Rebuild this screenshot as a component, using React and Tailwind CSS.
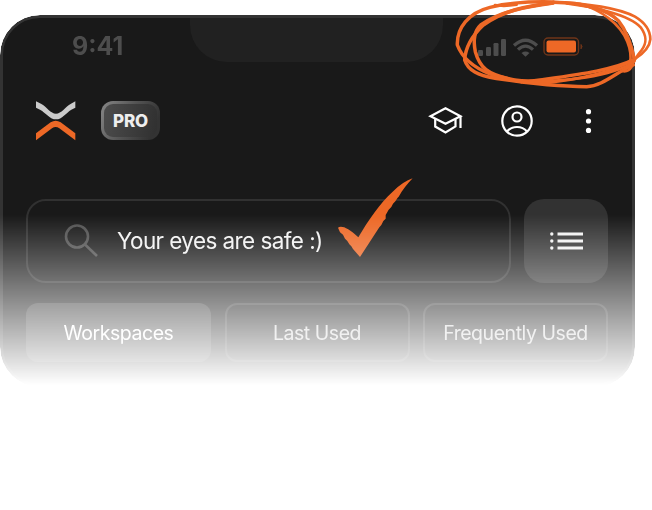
const font = "font-['Inter','Liberation_Sans',sans-serif]";

function StatusBar() {
  return (
    <div className="relative flex h-[62px] items-start justify-between pl-[69px] pr-[49px]">
      <div className="absolute left-[187px] top-0 h-[44px] w-[253px] rounded-b-[37px] bg-[#212121]" />
      <span className="mt-[13px] text-[25px] font-bold leading-[30px] text-[#4d4d4d]">9:41</span>
      <svg className="mt-[19px]" width="106" height="22" viewBox="0 0 106 22" fill="none">
        <g fill="#4d4d4d">
          <rect x="1" y="13" width="5" height="6" rx="1.2" />
          <rect x="9" y="10" width="5" height="9" rx="1.2" />
          <rect x="16.5" y="6" width="5" height="13" rx="1.2" />
          <rect x="24" y="2" width="5" height="17" rx="1.2" />
        </g>
        <g stroke="#4d4d4d" strokeWidth="3.2">
          <path d="M37 8.5Q48.5-2 60 8.5" />
          <path d="M41 12.6Q48.5 5.7 56 12.6" />
        </g>
        <path d="M44.5 15.9Q48.5 13 52.5 15.9L48.5 19.8Z" fill="#4d4d4d" />
        <rect x="67" y="1" width="34.5" height="17" rx="4" stroke="#6f3519" strokeWidth="1.4" />
        <rect x="69.5" y="3.5" width="29.5" height="12" rx="2" fill="#ed6826" />
        <path d="M104 7.5Q106 9.5 104 11.8Z" fill="#6f3519" stroke="#6f3519" />
      </svg>
    </div>
  );
}

function Logo() {
  return (
    <svg className="mt-[1px]" width="40" height="40" viewBox="0 0 120 120">
      <path d="M0 1L15 8C32 17 44 38 60 38S88 17 105 8L118 1V20L106 26C90 36 78 55 60 55S30 36 12 26L0 20Z" fill="#cbcbcb" />
      <path d="M0 97L44 64Q59 54 74 64L118 97V118L70 82Q59 74 48 82L0 118Z" fill="#ed6826" />
    </svg>
  );
}

function Header() {
  return (
    <div className="flex h-[40px] items-center pl-[33px] pr-[40px]">
      <Logo />
      <div className="ml-[25px] h-[39px] w-[59px] rounded-[12px] bg-[linear-gradient(115deg,#888_0%,#555_45%,#333_85%)] p-[3px]">
        <div className="flex h-full items-center justify-center rounded-[9px] bg-[linear-gradient(100deg,#4c4c4c,#303030)] pt-[3px] text-[17px] font-extrabold leading-none tracking-[-0.1px] text-[#eee]">PRO</div>
      </div>
      <svg className="ml-auto mt-[1px]" width="164" height="34" viewBox="0 0 164 34" fill="none" stroke="#fff" strokeWidth="2.2">
        <path d="M2.5 12.2L17.5 4.2L32.5 12.2L17.5 19.8Z" />
        <path d="M7.2 15V22.5L17.5 28.5L27.5 22.5V15M32.5 12.2V24" />
        <circle cx="89" cy="17" r="14.7" />
        <circle cx="89" cy="13" r="4.5" />
        <path d="M79 27.5C82 24 86 23 89 23S96 24 99 27.5" />
        <g fill="#fff" stroke="none">
          <circle cx="160.5" cy="7.7" r="2.6" />
          <circle cx="160.5" cy="17" r="2.6" />
          <circle cx="160.5" cy="26.4" r="2.6" />
        </g>
      </svg>
    </div>
  );
}

function SearchRow() {
  return (
    <div className="flex gap-[13px]">
      <div className="flex h-[84px] w-[485px] items-center rounded-[20px] border-2 border-[#313131] pl-[36px]">
        <svg width="35" height="34" viewBox="0 0 35 34" fill="none" stroke="#505050" strokeWidth="2.6">
          <circle cx="13" cy="12.5" r="11" />
          <path d="M21 20.5L33 32" />
        </svg>
        <span className="ml-[18px] whitespace-nowrap text-[22.5px] tracking-[-0.58px] text-[#f2f2f2]">Your eyes are safe :)</span>
      </div>
      <div className="flex h-[84px] w-[84px] items-center justify-center rounded-[20px] bg-[#323232]">
        <svg width="33" height="19" viewBox="0 0 33 19" fill="#f2f2f2">
          <circle cx="1.8" cy="2" r="1.7" />
          <circle cx="1.8" cy="9" r="1.7" />
          <circle cx="1.8" cy="16" r="1.7" />
          <path d="M7.5.6H33V3.4H7.5ZM7.5 7.6H33V10.4H7.5ZM7.5 14.6H33V17.4H7.5Z" />
        </svg>
      </div>
    </div>
  );
}

function Tabs() {
  return (
    <div className="mt-[20px] flex gap-[13.5px] text-[19.5px] tracking-[-0.45px] text-white/80">
      <div className="flex h-[59px] w-[185px] items-center justify-center rounded-[12px] bg-[#3a3a3a] pt-[2px] text-white">Workspaces</div>
      <div className="flex h-[59px] w-[185px] items-center justify-center rounded-[12px] border-2 border-[#353535] pt-[2px]">Last Used</div>
      <div className="flex h-[59px] w-[185px] items-center justify-center whitespace-nowrap rounded-[12px] border-2 border-[#353535] pt-[2px]">Frequently Used</div>
    </div>
  );
}

function Checkmark() {
  return (
    <svg className="absolute left-[320px] top-[155px]" width="110" height="95" viewBox="0 0 330 285">
      <path d="M54 173C65 166 85 174 115 202C145 150 180 100 218 65Q250 34 278 25C262 42 247 60 236 80L233 83L226 94L219 101L214 111L206 119L197 135L197 146L190 153L184 165L178 172L120 261L99 237L94 229L88 223L82 213L75 206L69 194L60 187Z" fill="#ed6826" />
    </svg>
  );
}

function Scribble() {
  return (
    <svg className="absolute left-[440px] top-0" width="212" height="100" viewBox="0 0 636 300" fill="none" stroke="#ed6826" strokeLinecap="round" strokeLinejoin="round">
      <g strokeWidth="10.5">
        <path d="M340 6C270 4 200 10 150 22C85 38 50 85 52 135C65 170 95 200 150 222C190 237 215 240 245 245" />
        <path d="M340 8C255 18 190 32 130 75C95 108 76 145 74 180C84 212 115 226 165 235C240 246 330 260 440 260C490 258 530 215 580 195" />
        <path d="M340 9C260 20 180 34 122 75C100 95 100 125 106 155C120 205 145 222 205 236" />
        <path d="M340 7C430 8 500 28 535 62C562 95 577 150 583 178C520 210 420 223 300 240C260 247 215 240 180 230" />
      </g>
      <g strokeWidth="8">
        <path d="M165 15C185 19 205 18 230 14" />
        <path d="M340 6C440 9 540 25 585 50C615 68 631 90 631 118C629 145 605 164 583 178C530 212 420 240 300 250" />
        <path d="M380 10C460 20 570 45 602 82C622 110 620 130 605 150C590 168 582 180 575 200C565 218 550 214 545 213" />
        <path d="M420 12C480 28 540 70 562 125C570 145 574 170 570 190" />
        <path d="M583 184C530 223 410 243 245 246" />
      </g>
    </svg>
  );
}

export default function App() {
  return (
    <main className={`relative h-[510px] w-[652px] overflow-hidden bg-white pt-[15px] ${font}`}>
      <section className="relative h-[372px] w-[635px] overflow-hidden rounded-[40px] [mask-image:linear-gradient(to_bottom,black_200px,transparent_370px)]">
        <div className="h-full rounded-[40px] border-[3px] border-[#333] bg-[#191919]">
          <StatusBar />
          <div className="mt-[20px]">
            <Header />
          </div>
          <div className="mt-[59px] pl-[23px]">
            <SearchRow />
            <Tabs />
          </div>
        </div>
        <Checkmark />
      </section>
      <Scribble />
    </main>
  );
}
